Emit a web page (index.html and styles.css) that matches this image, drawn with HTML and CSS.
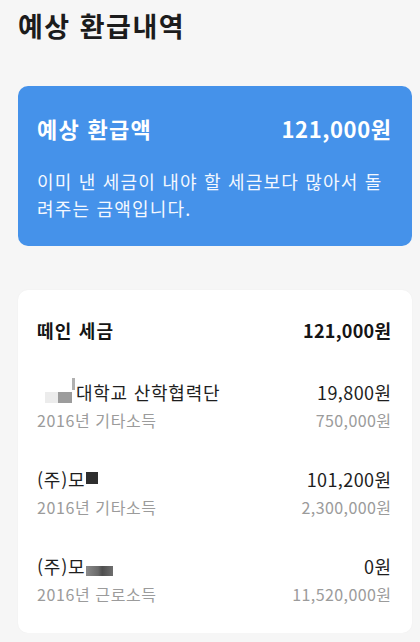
FILE: index.html
```html
<!DOCTYPE html>
<html lang="ko">
<head>
<meta charset="utf-8">
<link rel="stylesheet" href="styles.css">
</head>
<body>
<div class="page">
  <h1 class="title">예상 환급내역</h1>

  <section class="summary">
    <div class="summary-head">
      <span>예상 환급액</span>
      <span class="num">121,000원</span>
    </div>
    <p class="summary-desc">이미 낸 세금이 내야 할 세금보다 많아서 돌려주는 금액입니다.</p>
  </section>

  <section class="list">
    <div class="list-head">
      <span>떼인 세금</span>
      <span class="num">121,000원</span>
    </div>

    <div class="item">
      <div class="line">
        <span class="name"><span class="mask mask-a"><i class="p1"></i><i class="p2"></i><i class="p3"></i></span>대학교 산학협력단</span>
        <span class="num">19,800원</span>
      </div>
      <div class="line sub">
        <span>2016년 기타소득</span>
        <span class="num">750,000원</span>
      </div>
    </div>

    <div class="item">
      <div class="line">
        <span class="name">(주)모<span class="mask mask-b"><i class="p1"></i></span></span>
        <span class="num">101,200원</span>
      </div>
      <div class="line sub">
        <span>2016년 기타소득</span>
        <span class="num">2,300,000원</span>
      </div>
    </div>

    <div class="item">
      <div class="line">
        <span class="name">(주)모<span class="mask mask-c"><i class="p1"></i></span></span>
        <span class="num">0원</span>
      </div>
      <div class="line sub">
        <span>2016년 근로소득</span>
        <span class="num">11,520,000원</span>
      </div>
    </div>
  </section>
</div>
</body>
</html>
```

FILE: styles.css
```css
* { box-sizing: border-box; }

html, body {
  margin: 0;
  padding: 0;
  background: #f6f6f6;
}

body {
  font-family: "Noto Sans CJK KR", "Noto Sans", sans-serif;
  color: #1b1b1b;
}

.page {
  padding: 8px 8px 0 18px;
}

.title {
  margin: 0;
  font-size: 27px;
  line-height: 36px;
  font-weight: 700;
  color: #1c1c1c;
  letter-spacing: 1.5px;
}

.summary {
  margin-top: 42px;
  background: #4592ea;
  border-radius: 10px;
  padding: 27px 21px 24px 19px;
  color: #ffffff;
}

.summary-head {
  display: flex;
  justify-content: space-between;
  font-size: 22px;
  line-height: 30px;
  font-weight: 700;
  letter-spacing: 1.3px;
}

.summary-head .num {
  letter-spacing: 0.6px;
  margin-right: -0.6px;
}

.summary-desc {
  margin: 25px 0 0;
  font-size: 18px;
  line-height: 27px;
  color: #f4f8ff;
  letter-spacing: 1.2px;
}

.list {
  margin-top: 44px;
  background: #ffffff;
  border-radius: 10px;
  padding: 27px 21px 25px 19px;
  box-shadow: 0 0 2px rgba(0, 0, 0, 0.04);
}

.list-head {
  display: flex;
  justify-content: space-between;
  font-size: 18px;
  line-height: 26px;
  font-weight: 700;
  color: #151515;
  letter-spacing: 1.2px;
}

.list-head .num {
  letter-spacing: 0.25px;
  margin-right: -0.25px;
}

.item {
  margin-top: 31px;
}

.list-head + .item {
  margin-top: 35px;
}

.line {
  display: flex;
  justify-content: space-between;
  align-items: center;
  height: 28px;
  font-size: 18px;
  line-height: 28px;
  color: #1e1e1e;
  letter-spacing: 0.75px;
}

.line .num {
  letter-spacing: 0.4px;
  margin-right: -0.4px;
}

.line.sub {
  font-size: 16px;
  color: #9b9b9b;
  letter-spacing: 0.6px;
}

.name {
  display: flex;
  align-items: center;
}

.mask {
  display: flex;
  align-items: flex-start;
  height: 28px;
}

.mask i {
  display: block;
}

.mask-a {
  margin-left: 8px;
  margin-right: 1px;
}

.mask-a .p1 {
  width: 13px;
  height: 11px;
  margin-top: 14px;
  background: #ececec;
}

.mask-a .p2 {
  width: 14px;
  height: 11px;
  margin-top: 14px;
  background: #9c9c9c;
}

.mask-a .p3 {
  width: 3px;
  height: 12px;
  margin-top: 0;
  background: #b0b0b0;
}

.mask-b {
  margin-left: 1px;
}

.mask-b .p1 {
  width: 12px;
  height: 12px;
  margin-top: 7px;
  background: #2e2e2e;
}

.mask-c {
  margin-left: 1px;
}

.mask-c .p1 {
  width: 27px;
  height: 10px;
  margin-top: 14px;
  background: linear-gradient(90deg, #8a8a8a 0%, #6a6a6a 45%, #4e4e4e 60%, #6e6e6e 100%);
}
```
